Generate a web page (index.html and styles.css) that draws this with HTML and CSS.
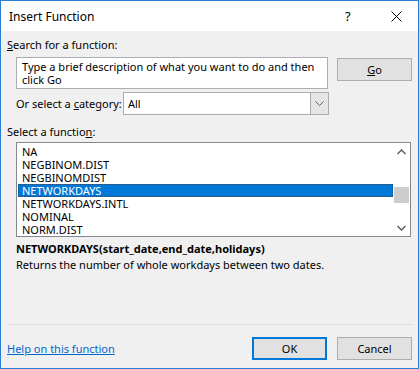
FILE: index.html
```html
<!DOCTYPE html>
<html lang="en">
<head>
    <meta charset="UTF-8">
    <title>Insert Function</title>
    <link rel="stylesheet" href="styles.css">
</head>
<body>

    <div class="dialog">
        <!-- Title bar -->
        <div class="titlebar">
            <span class="title">Insert Function</span>
            <span class="help-btn">?</span>
            <span class="close-btn">
                <svg width="11" height="11" viewBox="0 0 11 11">
                    <path d="M0.5 0.5 L10.5 10.5 M10.5 0.5 L0.5 10.5" stroke="#000" stroke-width="1" fill="none"/>
                </svg>
            </span>
        </div>

        <div class="content">
            <div class="label"><u>S</u>earch for a function:</div>

            <div class="search-row">
                <div class="search-box">Type a brief description of what you want to do and then click Go</div>
                <button class="btn go-btn"><u>G</u>o</button>
            </div>

            <div class="category-row">
                <span class="cat-label">Or select a <u>c</u>ategory:</span>
                <div class="select-box">
                    <span class="select-value">All</span>
                    <span class="select-arrow">
                        <svg width="9" height="5" viewBox="0 0 9 5">
                            <path d="M0.5 0.5 L4.5 4.5 L8.5 0.5" stroke="#606060" stroke-width="1" fill="none"/>
                        </svg>
                    </span>
                </div>
            </div>

            <div class="label list-label">Select a functio<u>n</u>:</div>

            <div class="listbox">
                <ul class="items">
                    <li>NA</li>
                    <li>NEGBINOM.DIST</li>
                    <li>NEGBINOMDIST</li>
                    <li class="selected">NETWORKDAYS</li>
                    <li>NETWORKDAYS.INTL</li>
                    <li>NOMINAL</li>
                    <li>NORM.DIST</li>
                </ul>
                <div class="scrollbar">
                    <span class="arrow">
                        <svg width="9" height="6" viewBox="0 0 9 6">
                            <path d="M0.5 5 L4.5 1 L8.5 5" stroke="#606060" stroke-width="1.5" fill="none"/>
                        </svg>
                    </span>
                    <div class="track">
                        <div class="thumb"></div>
                    </div>
                    <span class="arrow">
                        <svg width="9" height="6" viewBox="0 0 9 6">
                            <path d="M0.5 1 L4.5 5 L8.5 1" stroke="#606060" stroke-width="1.5" fill="none"/>
                        </svg>
                    </span>
                </div>
            </div>

            <div class="signature">NETWORKDAYS(start_date,end_date,holidays)</div>
            <div class="description">Returns the number of whole workdays between two dates.</div>
        </div>

        <!-- Footer -->
        <div class="footer">
            <a class="help-link" href="#">Help on this function</a>
            <div class="buttons">
                <button class="btn ok-btn">OK</button>
                <button class="btn">Cancel</button>
            </div>
        </div>
    </div>

</body>
</html>
```

FILE: styles.css
```css
body {
    margin: 0;
    font-family: "Noto Sans", "Open Sans", sans-serif;
    font-size: 11px;
    color: #000;
}
.dialog {
    width: 419px;
    height: 369px;
    box-sizing: border-box;
    border: 1px solid #2b7fd2;
    background-color: #f0f0f0;
    display: flex;
    flex-direction: column;
}
.titlebar {
    height: 30px;
    background-color: #fff;
    display: flex;
    align-items: center;
    padding-left: 8px;
    font-size: 12px;
}
.title {
    flex: 1;
}
.help-btn {
    width: 12px;
    margin-right: 34px;
    font-size: 13px;
}
.close-btn {
    display: flex;
    margin-right: 16px;
}
.content {
    padding: 6px 6px 0 6px;
}
.label {
    height: 15px;
    line-height: 15px;
}
.search-row {
    display: flex;
    align-items: flex-start;
    margin-top: 5px;
}
.search-box {
    margin-left: 9px;
    width: 312px;
    height: 32px;
    border: 1px solid #abadb3;
    background-color: #fff;
    padding: 2px 0 0 5px;
    box-sizing: border-box;
    line-height: 13px;
}
.btn {
    font-family: inherit;
    font-size: 11px;
    background-color: #e1e1e1;
    border: 1px solid #adadad;
    width: 75px;
    height: 23px;
    padding: 0;
    color: #000;
}
.go-btn {
    margin-left: 9px;
    margin-top: 1px;
}
.category-row {
    display: flex;
    align-items: center;
    margin-top: 3px;
    margin-left: 9px;
}
.cat-label {
    width: 107px;
}
.select-box {
    width: 206px;
    height: 23px;
    box-sizing: border-box;
    border: 1px solid #acacac;
    background-color: #fff;
    display: flex;
}
.select-value {
    flex: 1;
    padding-left: 4px;
    line-height: 21px;
}
.select-arrow {
    width: 17px;
    background-color: #e5e5e5;
    border-left: 1px solid #acacac;
    display: flex;
    align-items: center;
    justify-content: center;
}
.list-label {
    margin-top: 9px;
}
.listbox {
    margin: 3px 0 0 9px;
    width: 395px;
    height: 95px;
    box-sizing: border-box;
    border: 1px solid #828790;
    background-color: #fff;
    display: flex;
}
.items {
    list-style: none;
    margin: 0;
    padding: 2px 0 0 1px;
    flex: 1;
}
.items li {
    height: 13px;
    line-height: 13px;
    padding-left: 4px;
}
.items li.selected {
    background-color: #0078d7;
    color: #fff;
    outline: 1px dotted #1a4f80;
    outline-offset: -1px;
}
.scrollbar {
    width: 17px;
    display: flex;
    flex-direction: column;
}
.arrow {
    height: 17px;
    display: flex;
    align-items: center;
    justify-content: center;
}
.track {
    flex: 1;
    padding-top: 27px;
}
.thumb {
    height: 16px;
    margin: 0 1px;
    background-color: #cdcdcd;
}
.signature {
    font-weight: bold;
    margin: 4px 0 0 9px;
    height: 15px;
    line-height: 15px;
}
.description {
    margin: 1px 0 0 9px;
    line-height: 15px;
}
.footer {
    margin: auto 6px 8px 6px;
    border-top: 1px solid #dcdcdc;
    padding-top: 12px;
    display: flex;
    align-items: center;
}
.help-link {
    flex: 1;
    color: #0066cc;
    text-decoration: underline;
}
.buttons {
    display: flex;
    gap: 10px;
}
.ok-btn {
    border: 2px solid #0078d7;
}
```
